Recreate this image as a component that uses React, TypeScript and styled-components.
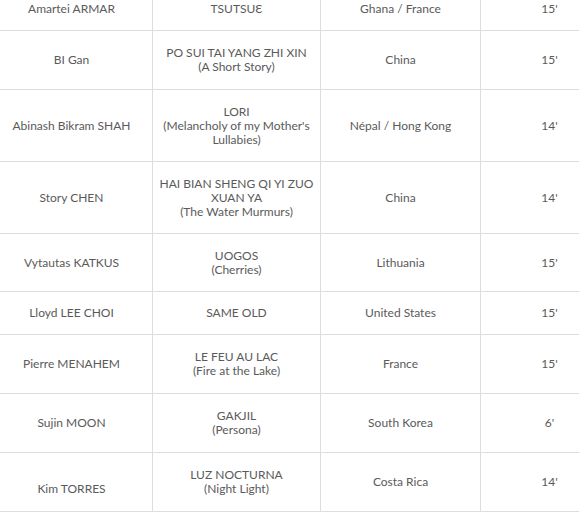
import React from 'react';
import styled, {createGlobalStyle} from 'styled-components';

type Film = {
  director: string;
  title: string[];
  country: string;
  length: string;
  height: number;
  shift?: number;
}

const films: Film[] = [
  {director: 'Amartei ARMAR', title: ['TSUTSUƐ'], country: 'Ghana / France', length: "15'", height: 43},
  {director: 'BI Gan', title: ['PO SUI TAI YANG ZHI XIN', '(A Short Story)'], country: 'China', length: "15'", height: 59},
  {director: 'Abinash Bikram SHAH', title: ['LORI', "(Melancholy of my Mother's", 'Lullabies)'], country: 'Népal / Hong Kong', length: "14'", height: 72},
  {director: 'Story CHEN', title: ['HAI BIAN SHENG QI YI ZUO', 'XUAN YA', '(The Water Murmurs)'], country: 'China', length: "14'", height: 72},
  {director: 'Vytautas KATKUS', title: ['UOGOS', '(Cherries)'], country: 'Lithuania', length: "15'", height: 58},
  {director: 'Lloyd LEE CHOI', title: ['SAME OLD'], country: 'United States', length: "15'", height: 43},
  {director: 'Pierre MENAHEM', title: ['LE FEU AU LAC', '(Fire at the Lake)'], country: 'France', length: "15'", height: 59},
  {director: 'Sujin MOON', title: ['GAKJIL', '(Persona)'], country: 'South Korea', length: "6'", height: 59},
  {director: 'Kim TORRES', title: ['LUZ NOCTURNA', '(Night Light)'], country: 'Costa Rica', length: "14'", height: 59, shift: 14},
];

export default function App() {
  return (
    <>
      <GlobalStyle/>
      <Page>
        <Table>
          <colgroup>
            <col style={{width: 162}}/>
            <col style={{width: 168}}/>
            <col style={{width: 160}}/>
            <col style={{width: 138}}/>
          </colgroup>
          <tbody>
            {films.map((film) => (
              <Row key={film.director} height={film.height}>
                <Cell>
                  <Shifted shift={film.shift ?? 0}>{film.director}</Shifted>
                </Cell>
                <Cell>
                  {film.title.map((line) => <Line key={line}>{line}</Line>)}
                </Cell>
                <Cell>{film.country}</Cell>
                <Cell>{film.length}</Cell>
              </Row>
            ))}
          </tbody>
        </Table>
      </Page>
    </>
  );
}

const GlobalStyle = createGlobalStyle`
  html, body {
    margin: 0;
    background: #ffffff;
    overflow: hidden;
  }
`;

const Page = styled.div`
  width: 579px;
  height: 520px;
  overflow: hidden;
`;

const Table = styled.table`
  border-collapse: collapse;
  table-layout: fixed;
  width: 628px;
  margin-left: -10px;
  margin-top: -13px;
  font-family: Lato, "Open Sans", sans-serif;
  font-size: 12px;
  line-height: 14px;
  color: #5a5a5a;
`;

const Row = styled.tr<{height: number}>`
  height: ${(props) => props.height}px;
`;

const Cell = styled.td`
  border: 1px solid #dddddd;
  text-align: center;
  vertical-align: middle;
  padding: 0 6px;
`;

const Line = styled.div`
  white-space: nowrap;
`;

const Shifted = styled.div<{shift: number}>`
  padding-top: ${(props) => props.shift}px;
`;
